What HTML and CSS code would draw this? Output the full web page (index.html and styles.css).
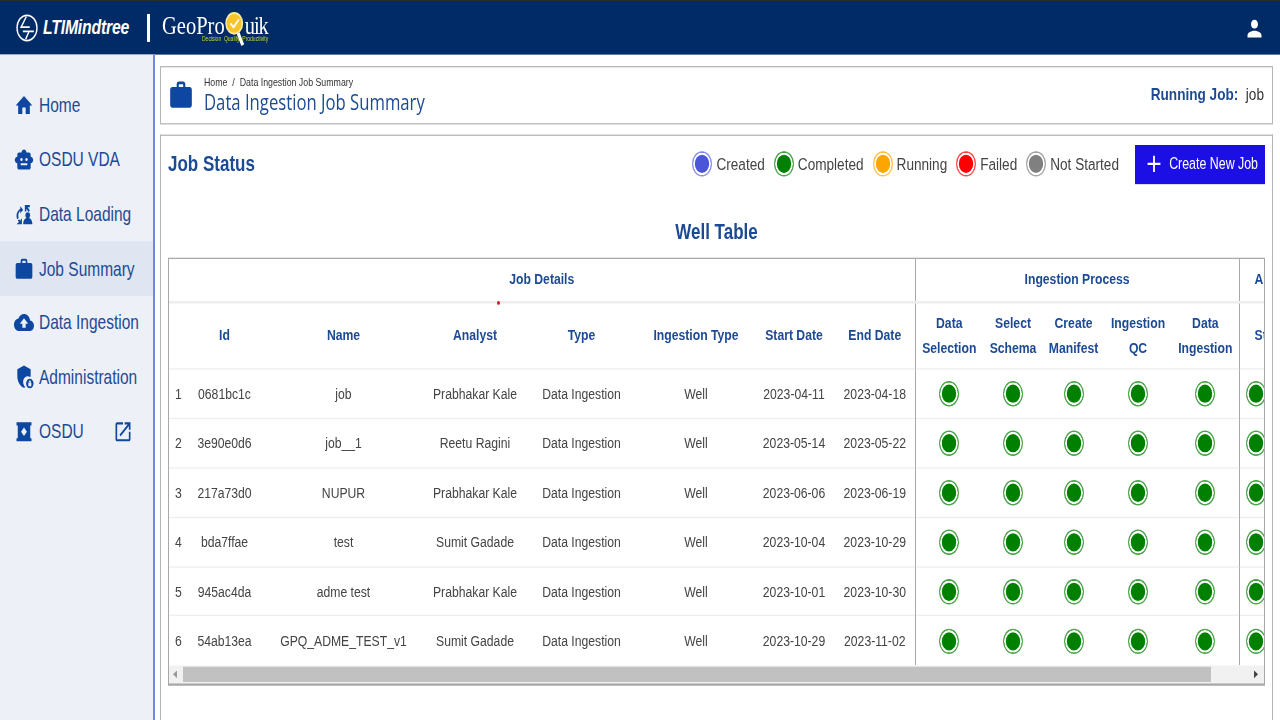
FILE: index.html
```html
<!DOCTYPE html>
<html lang="en">
<head>
<meta charset="utf-8">
<title>Data Ingestion Job Summary</title>
<link rel="stylesheet" href="styles.css">
</head>
<body>
<div class="page">
  <header class="topbar">
    <div class="brand">
      <svg class="lt-mark" viewBox="0 0 32 32"><circle cx="16" cy="16" r="14.5" fill="none" stroke="#fff" stroke-width="2"/><path d="M15 3 7.500 15H20M10 20H26M19 20l-5 9" fill="none" stroke="#fff" stroke-width="2"/></svg>
      <span class="lti">LTIMindtree</span>
      <span class="divider"></span>
      <span class="geo"><span class="geo-text">GeoPro</span><svg class="lens" viewBox="0 0 26 36"><path d="M17 22l6 12" stroke="#fff" stroke-width="4" fill="none"/><circle cx="12" cy="12" r="10.500" fill="#f5c52a" stroke="#f9e9a0" stroke-width="2"/><path d="M7 12l4 4 7-8" stroke="#fff" stroke-width="2" fill="none"/></svg><span class="geo-text tight">uik</span><span class="tag">Decision&nbsp; Quality&nbsp; Productivity</span></span>
    </div>
    <svg class="user" viewBox="0 0 24 24"><path d="M12 12c2.21 0 4-1.79 4-4s-1.79-4-4-4-4 1.79-4 4 1.79 4 4 4zm0 2c-2.67 0-8 1.34-8 4v2h16v-2c0-2.66-5.33-4-8-4z"/></svg>
  </header>
  <div class="body">
    <nav class="sidebar">
      <a class="nav-item"><svg class="nav-icon" viewBox="0 0 24 24"><path d="M10 20v-6h4v6h5v-8h3L12 3 2 12h3v8z"/></svg>Home</a>
      <a class="nav-item"><svg class="nav-icon" viewBox="0 0 24 24"><path d="M20 9V7c0-1.1-.9-2-2-2h-3c0-1.66-1.34-3-3-3S9 3.34 9 5H6c-1.1 0-2 .9-2 2v2c-1.66 0-3 1.34-3 3s1.34 3 3 3v4c0 1.1.9 2 2 2h12c1.1 0 2-.9 2-2v-4c1.66 0 3-1.34 3-3s-1.34-3-3-3zM7.5 11.5C7.5 10.67 8.17 10 9 10s1.5.67 1.5 1.5S9.83 13 9 13s-1.5-.67-1.5-1.5zM16 17H8v-2h8v2zm-1-4c-.83 0-1.5-.67-1.5-1.5S14.17 10 15 10s1.5.67 1.5 1.5S15.83 13 15 13z"/></svg>OSDU VDA</a>
      <a class="nav-item"><svg class="nav-icon" viewBox="0 0 24 24"><path d="M7.500 4v2.400C4.800 7.800 3 10.200 3 13c0 1.200.3 2.400.8 3.400L5.600 15.300C5.300 14.600 5.200 13.800 5.200 13c0-2 1-3.700 2.300-4.600V11L11 7.500zM3 21h6.500v-5.500l-2 2c-.6-.4-1-.8-1.300-1.200L4.500 17.500 6 19zM13 3h6v2h-2.500l2.500 3-1.500 1.500-2.700-3v2.500H13z"/><circle cx="16.500" cy="12.500" r="2.800"/><path d="M11 21c0-3.500 2.300-6 5.500-6s5.500 2.500 5.500 6z"/></svg>Data Loading</a>
      <a class="nav-item active"><svg class="nav-icon" viewBox="0 0 24 24"><path d="M20 6h-4V4c0-1.110-.89-2-2-2h-4c-1.110 0-2 .89-2 2v2H4c-1.110 0-1.990.89-1.990 2L2 19c0 1.110.89 2 2 2h16c1.110 0 2-.89 2-2V8c0-1.110-.89-2-2-2zm-6 0h-4V4h4v2z"/></svg>Job Summary</a>
      <a class="nav-item"><svg class="nav-icon" viewBox="0 0 24 24"><path d="M19.350 10.040C18.670 6.590 15.640 4 12 4 9.110 4 6.600 5.640 5.350 8.040 2.340 8.360 0 10.910 0 14c0 3.310 2.690 6 6 6h13c2.760 0 5-2.240 5-5 0-2.640-2.050-4.780-4.650-4.960zM14 13v4h-4v-4H7l5-5 5 5h-3z"/></svg>Data Ingestion</a>
      <a class="nav-item"><svg class="nav-icon" viewBox="0 0 24 24"><path d="M12 1 4 4.500V11c0 5 3.400 9.700 8 11 .6-.2 1.200-.4 1.700-.7A5 5 0 0 1 19 11.700c.4 0 .7 0 1 .1V4.500z"/><path d="M19 13.500a4.500 4.500 0 1 0 0 9 4.500 4.500 0 0 0 0-9zm0 1.700a1.300 1.300 0 0 1 1.300 1.300v.7h.5v3.300h-3.600v-3.300h.5v-.7A1.300 1.300 0 0 1 19 15.200zm0 .9a.4.4 0 0 0-.4.4v.7h.8v-.7a.4.4 0 0 0-.4-.4z" fill-rule="evenodd"/></svg>Administration</a>
      <a class="nav-item"><svg class="nav-icon" viewBox="0 0 24 24"><path d="M3 3h18v3h-1.500v12H21v3H3v-3h1.500V6H3zm9 5-3.500 4 3.500 4 3.500-4z" fill-rule="evenodd"/></svg>OSDU<svg class="nav-ext" viewBox="0 0 24 24"><path d="M19 19H5V5h7V3H5c-1.110 0-2 .9-2 2v14c0 1.100.89 2 2 2h14c1.100 0 2-.9 2-2v-7h-2v7zM14 3v2h3.590l-9.830 9.830 1.410 1.410L19 6.410V10h2V3h-7z"/></svg></a>
    </nav>
    <main class="main">
      <section class="title-card">
        <svg class="title-icon" viewBox="0 0 24 24"><path d="M20 6h-4V4c0-1.110-.89-2-2-2h-4c-1.110 0-2 .89-2 2v2H4c-1.110 0-1.990.89-1.990 2L2 19c0 1.110.89 2 2 2h16c1.110 0 2-.89 2-2V8c0-1.110-.89-2-2-2zm-6 0h-4V4h4v2z"/></svg>
        <div class="title-text">
          <div class="crumbs">Home &nbsp;/&nbsp; Data Ingestion Job Summary</div>
          <h1 class="page-title">Data Ingestion Job Summary</h1>
        </div>
        <div class="running"><b>Running Job:</b>&nbsp; job</div>
      </section>
      <section class="status-card">
        <div class="status-head">
          <h2 class="status-title">Job Status</h2>
          <div class="legend">
            <span class="legend-item"><i class="dot created"></i>Created</span>
            <span class="legend-item"><i class="dot completed"></i>Completed</span>
            <span class="legend-item"><i class="dot pending"></i>Running</span>
            <span class="legend-item"><i class="dot failed"></i>Failed</span>
            <span class="legend-item"><i class="dot idle"></i>Not Started</span>
          </div>
          <button class="new-job"><svg class="plus" viewBox="0 0 24 24"><path d="M19 13h-6v6h-2v-6H5v-2h6V5h2v6h6v2z"/></svg>Create New Job</button>
        </div>
        <h3 class="table-title">Well Table</h3>
        <div class="table-box">
          <div class="table-clip">
            <table class="jobs">
              <colgroup>
                <col class="c-n"><col class="c-id"><col class="c-name"><col class="c-an"><col class="c-type"><col class="c-it"><col class="c-sd"><col class="c-ed">
                <col class="c-p1"><col class="c-p2"><col class="c-p3"><col class="c-p4"><col class="c-p5"><col class="c-last">
              </colgroup>
              <thead>
                <tr class="group-row"><th colspan="8" class="g1">Job Details</th><th colspan="5" class="sep">Ingestion Process</th><th class="sep lastcell">Actions</th></tr>
                <tr class="head-row">
                  <th></th><th>Id</th><th>Name</th><th>Analyst</th><th>Type</th><th>Ingestion Type</th><th>Start Date</th><th>End Date</th>
                  <th class="sep">Data<br>Selection</th><th>Select<br>Schema</th><th>Create<br>Manifest</th><th>Ingestion<br>QC</th><th>Data<br>Ingestion</th><th class="sep lastcell">Status</th>
                </tr>
              </thead>
              <tbody>
                <tr><td class="num">1</td><td>0681bc1c</td><td>job</td><td>Prabhakar Kale</td><td>Data Ingestion</td><td>Well</td><td>2023-04-11</td><td>2023-04-18</td><td class="sep"><i class="dot completed"></i></td><td><i class="dot completed"></i></td><td><i class="dot completed"></i></td><td><i class="dot completed"></i></td><td><i class="dot completed"></i></td><td class="sep lastdot"><i class="dot completed"></i></td></tr>
                <tr><td class="num">2</td><td>3e90e0d6</td><td>job__1</td><td>Reetu Ragini</td><td>Data Ingestion</td><td>Well</td><td>2023-05-14</td><td>2023-05-22</td><td class="sep"><i class="dot completed"></i></td><td><i class="dot completed"></i></td><td><i class="dot completed"></i></td><td><i class="dot completed"></i></td><td><i class="dot completed"></i></td><td class="sep lastdot"><i class="dot completed"></i></td></tr>
                <tr><td class="num">3</td><td>217a73d0</td><td>NUPUR</td><td>Prabhakar Kale</td><td>Data Ingestion</td><td>Well</td><td>2023-06-06</td><td>2023-06-19</td><td class="sep"><i class="dot completed"></i></td><td><i class="dot completed"></i></td><td><i class="dot completed"></i></td><td><i class="dot completed"></i></td><td><i class="dot completed"></i></td><td class="sep lastdot"><i class="dot completed"></i></td></tr>
                <tr><td class="num">4</td><td>bda7ffae</td><td>test</td><td>Sumit Gadade</td><td>Data Ingestion</td><td>Well</td><td>2023-10-04</td><td>2023-10-29</td><td class="sep"><i class="dot completed"></i></td><td><i class="dot completed"></i></td><td><i class="dot completed"></i></td><td><i class="dot completed"></i></td><td><i class="dot completed"></i></td><td class="sep lastdot"><i class="dot completed"></i></td></tr>
                <tr><td class="num">5</td><td>945ac4da</td><td>adme test</td><td>Prabhakar Kale</td><td>Data Ingestion</td><td>Well</td><td>2023-10-01</td><td>2023-10-30</td><td class="sep"><i class="dot completed"></i></td><td><i class="dot completed"></i></td><td><i class="dot completed"></i></td><td><i class="dot completed"></i></td><td><i class="dot completed"></i></td><td class="sep lastdot"><i class="dot completed"></i></td></tr>
                <tr><td class="num">6</td><td>54ab13ea</td><td>GPQ_ADME_TEST_v1</td><td>Sumit Gadade</td><td>Data Ingestion</td><td>Well</td><td>2023-10-29</td><td>2023-11-02</td><td class="sep"><i class="dot completed"></i></td><td><i class="dot completed"></i></td><td><i class="dot completed"></i></td><td><i class="dot completed"></i></td><td><i class="dot completed"></i></td><td class="sep lastdot"><i class="dot completed"></i></td></tr>
              </tbody>
            </table>
          </div>
          <div class="scrollbar">
            <span class="arrow left"></span>
            <span class="thumb"></span>
            <span class="arrow right"></span>
          </div>
        </div>
        <span class="red-mark"></span>
      </section>
    </main>
  </div>
</div>
</body>
</html>
```
FILE: styles.css
```css
* { box-sizing: border-box; }
html, body { margin: 0; padding: 0; height: 720px; overflow: hidden; background: #fff; }
body { font-family: "Liberation Sans", Arial, sans-serif; color: #444; }

/* The whole reference is stretched vertically; heights below are in unstretched units. */
.page { width: 1280px; height: 567px; transform: scaleY(1.27); transform-origin: 0 0; display: flex; flex-direction: column; overflow: hidden; }

.topbar { height: 43.300px; flex: none; background: #002b66; border-top: 1.600px solid #2b2b2b; display: flex; align-items: center; justify-content: space-between; padding-right: 15px; }
.brand { display: flex; align-items: center; padding-left: 16px; }
.lt-mark { width: 22px; height: 22px; flex: none; }
.lti { margin-left: 5px; width: 87px; color: #fff; font-weight: 700; font-style: italic; font-size: 15.800px; letter-spacing: -0.2px; white-space: nowrap; }
.divider { width: 2.500px; height: 22px; margin: 0 12.500px 0 17px; background: #fff; }
.geo { position: relative; display: flex; align-items: center; color: #fff; font-family: "Liberation Serif", serif; font-size: 20.500px; margin-top: -3px; }
.geo-text { line-height: 0.85; }
.tight { letter-spacing: -1px; }
.lens { width: 24px; height: 28px; margin: 4px -2px 0 -2px; flex: none; }
.tag { position: absolute; left: 40px; top: 23px; color: #c9d62c; font-family: "Liberation Sans", sans-serif; font-size: 5px; line-height: 1; white-space: nowrap; }
.user { width: 21px; height: 21px; fill: #fff; }

.body { flex: 1; display: flex; min-height: 0; }
.sidebar { width: 155px; flex: none; background: #eef0f7; border-right: 2px solid #6f86e8; padding-top: 18.700px; }
.nav-item { height: 42.750px; display: flex; align-items: center; padding-left: 14px; color: #1c4a94; font-size: 15.500px; white-space: nowrap; }
.nav-item.active { background: #dfe6f2; }
.nav-icon { width: 20px; height: 20px; margin-right: 5px; flex: none; fill: #0d47a1; }
.nav-ext { width: 20px; height: 20px; margin-left: 29px; flex: none; fill: #0d47a1; }

.main { flex: 1; min-width: 0; padding: 8.700px 7px 0 5px; display: flex; flex-direction: column; gap: 8px; position: relative; }
.title-card { height: 46.500px; flex: none; border: 1px solid #b5b5b5; display: flex; align-items: center; padding: 0 8px 0 7px; }
.title-icon { width: 26px; height: 26px; flex: none; fill: #0d47a1; margin-right: 10px; }
.title-text { flex: 1; }
.crumbs { font-size: 8.800px; color: #333; line-height: 12px; white-space: nowrap; }
.page-title { margin: 0; font-family: "Open Sans", sans-serif; font-weight: 400; font-size: 16.700px; color: #1c4a94; line-height: 20.800px; white-space: nowrap; }
.running { font-size: 13.600px; color: #333; white-space: nowrap; margin-bottom: 1px; }
.running b { color: #1c4a94; }

.status-card { flex: 1; min-height: 0; border: 1px solid #b5b5b5; border-bottom: 0; padding: 6.500px 7px 0 7px; position: relative; }
.status-head { display: flex; align-items: center; height: 31px; }
.status-title { margin: 1.500px 0 0; flex: 1; color: #1c4a94; font-size: 17px; font-weight: 700; }
.legend { display: flex; gap: 9px; margin-right: 16px; }
.legend-item { display: flex; align-items: center; gap: 4px; font-size: 13.600px; color: #444; white-space: nowrap; }
.new-job { width: 130px; height: 31px; background: #1c0fe6; color: #fff; border: 0; font-family: inherit; font-size: 12.400px; display: flex; align-items: center; justify-content: flex-end; padding: 0 7px 0 0; white-space: nowrap; }
.plus { width: 22px; height: 22px; fill: #fff; margin-right: 4px; flex: none; }

.dot { display: inline-block; width: 20px; height: 20px; border-radius: 50%; flex: none; border: 1px solid; box-shadow: inset 0 0 0 1.800px #fff; vertical-align: middle; }
.created { background: #4a55d8; border-color: #8a92e6; }
.completed { background: #008000; border-color: #4da64d; }
.pending { background: #ffa500; border-color: #ffc04d; }
.failed { background: #ff0000; border-color: #ff4d4d; }
.idle { background: #808080; border-color: #a6a6a6; }

.table-title { margin: 0; padding-top: 28.500px; height: 58.500px; text-align: center; color: #1c4a94; font-size: 17px; font-weight: 700; line-height: 20px; }

.table-box { width: 1097px; border: 1px solid #a8a8a8; border-bottom-width: 2px; background: #fff; }
.table-clip { overflow: hidden; }
.jobs { table-layout: fixed; border-collapse: collapse; width: 1131px; font-size: 12.200px; color: #444; }
.c-n { width: 19px; } .c-id { width: 73px; } .c-name { width: 165px; } .c-an { width: 98px; }
.c-type { width: 115px; } .c-it { width: 114px; } .c-sd { width: 82px; } .c-ed { width: 80px; }
.c-p1 { width: 68px; } .c-p2 { width: 60px; } .c-p3 { width: 61px; } .c-p4 { width: 68px; } .c-p5 { width: 67px; } .c-last { width: 61px; }
.jobs th { color: #1c4a94; font-weight: 700; text-align: center; padding: 0; line-height: 19.700px; }
.jobs td { text-align: center; padding: 0; height: 38.800px; border-top: 1.500px solid #eeeeee; white-space: nowrap; }
.group-row th { height: 33.400px; border-bottom: 2px solid #eeeeee; }
.head-row th { height: 53.100px; }
.jobs .sep { border-left: 1px solid #a8a8a8; }
.jobs .lastcell { text-align: left; padding-left: 15px; }
.jobs .lastdot { text-align: left; padding-left: 6px; }
.jobs .num { text-align: left; padding-left: 6px; }

.scrollbar { height: 14.400px; background: #f1f1f1; display: flex; align-items: center; padding: 0 2px 0 14px; }
.thumb { width: 1028px; height: 12px; background: #c1c1c1; margin-right: auto; }
.arrow { width: 0; height: 0; border-top: 3px solid transparent; border-bottom: 3px solid transparent; position: relative; }
.arrow.left { border-right: 4px solid #999; margin-left: -10px; margin-right: 6px; }
.arrow.right { border-left: 4px solid #444; margin-right: 4px; }

.red-mark { position: absolute; left: 335.500px; top: 129.700px; width: 3px; height: 3px; border-radius: 50%; background: #e01020; }
```
